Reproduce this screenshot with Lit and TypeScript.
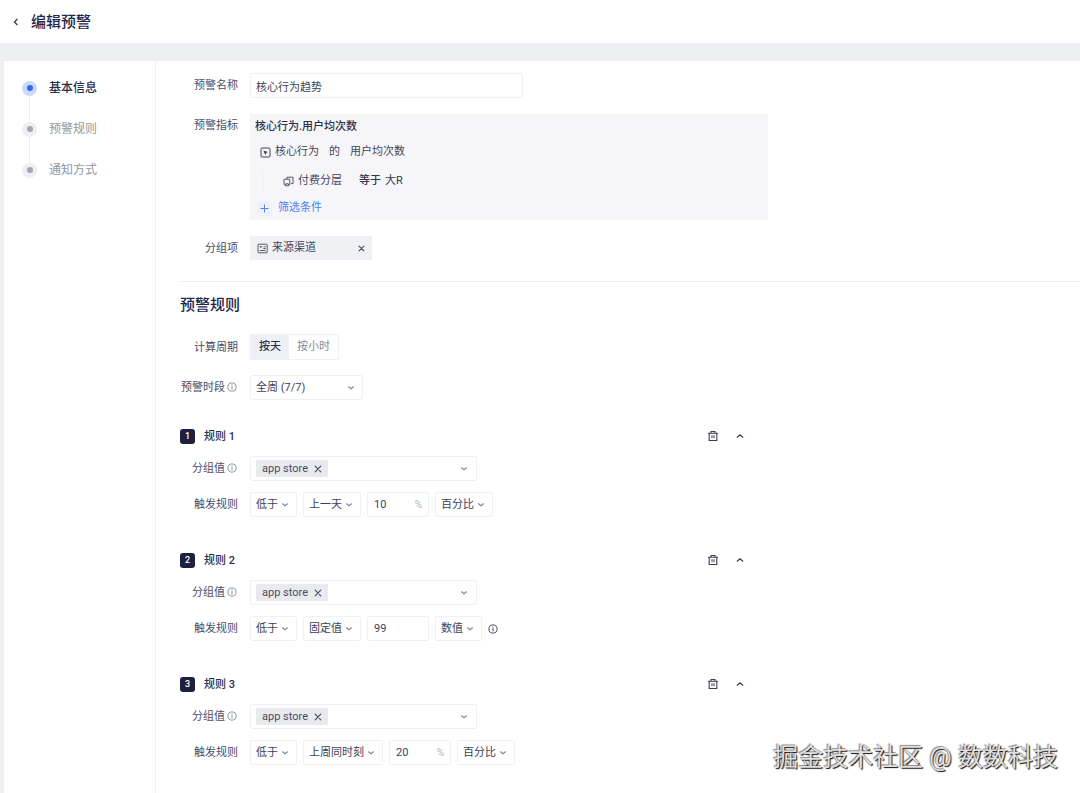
import { LitElement, html, svg, css, nothing } from "lit";
import { customElement, property, state } from "lit/decorators.js";
import { classMap } from "lit/directives/class-map.js";

interface Rule {
  id: number;
  group: string;
  compare: string;
  base: string;
  value: string;
  unit: string;
  percent: boolean;
}

const base = css`
  * { box-sizing: border-box; }
  button, input, select { font: inherit; color: inherit; margin: 0; }
  button { border: 0; padding: 0; background: none; cursor: pointer; }
  svg { display: block; flex: none; }
  .field {
    display: grid;
    grid-template-columns: 58px minmax(0, 1fr);
    column-gap: 12px;
    align-items: center;
  }
  .label {
    display: flex;
    justify-content: flex-end;
    align-items: center;
    gap: 2px;
    padding-top: 1px;
    white-space: nowrap;
    color: #4a4d66;
  }
  .label svg { margin: 0 1px 2px 0; color: #85889a; }
  .box {
    height: 25px;
    border: 1px solid #f0f1f4;
    border-radius: 2px;
    background: #fff;
    color: #3c3f58;
  }
`;

const chevron = (up = false) => html`<svg width="8" height="8" viewBox="0 0 8 8" fill="none" stroke="currentColor" stroke-width="1.2" stroke-linecap="round" stroke-linejoin="round" aria-hidden="true">
  ${up ? svg`<path d="M1.2 5.2 4 2.8 6.8 5.2"/>` : svg`<path d="M1.6 2.8 4 4.8 6.4 2.8"/>`}
</svg>`;

const info = () => html`<svg width="10" height="10" viewBox="0 0 10 10" fill="none" stroke="currentColor" aria-hidden="true">
  <circle cx="5" cy="5" r="4.1" stroke-width="0.9"/><path d="M5 4.3V7.4M5 2.5V3.5" stroke-width="1"/>
</svg>`;

const cross = (size: number) => html`<svg width=${size} height=${size} viewBox="0 0 8 8" fill="none" stroke="currentColor" stroke-width="1.2" stroke-linecap="round" aria-hidden="true">
  <path d="M1.2 1.2 6.8 6.8M6.8 1.2 1.2 6.8"/>
</svg>`;

@customElement("select-box")
class SelectBox extends LitElement {
  @property() value = "";
  @property() label = "";

  static styles = [base, css`
    :host { display: block; }
    .wrap { position: relative; display: flex; align-items: center; }
    select {
      appearance: none;
      width: 100%;
      padding: 0 18px 0 5px;
      outline: none;
    }
    svg { position: absolute; right: 8px; color: #85889a; pointer-events: none; }
  `];

  render() {
    return html`<div class="wrap">
      <select class="box" aria-label=${this.label}><option>${this.value}</option></select>
      ${chevron()}
    </div>`;
  }
}

@customElement("rule-card")
class RuleCard extends LitElement {
  @property({ attribute: false }) rule!: Rule;

  static styles = [base, css`
    :host { display: block; }
    .head { display: flex; align-items: center; height: 16px; max-width: 568px; margin-bottom: 12px; }
    .badge {
      width: 15px; height: 15px; border-radius: 3px; margin-right: 9px;
      background: #1f2040; color: #fff;
      display: grid; place-items: center;
      font-size: 9px; font-weight: 500; line-height: 15px;
    }
    .name { margin: 0; padding-top: 2px; font-size: 11px; font-weight: 500; color: #2c2f4a; flex: 1; }
    .tools { display: flex; gap: 11px; color: #3a3d50; }
    .tools button { width: 16px; height: 16px; display: grid; place-items: center; }
    .groups { display: flex; align-items: center; justify-content: space-between; max-width: 227px; padding: 0 8px 0 5px; }
    .tag { display: flex; align-items: center; gap: 6px; height: 17px; padding: 0 6px; background: #e9eaee; color: #4a4d62; }
    .open { color: #85889a; }
    .field + .field { margin-top: 11px; }
    .line { display: flex; align-items: center; gap: 6px; }
    .amount { display: flex; align-items: center; width: 62px; padding: 0 6px; }
    .amount input { flex: 1; min-width: 0; width: 0; border: 0; padding: 0; background: none; outline: none; }
    .sign { color: #b4b6c0; font-size: 10px; }
    .note { color: #3a3d50; }
  `];

  render() {
    const r = this.rule;
    return html`
      <div class="head">
        <span class="badge">${r.id}</span>
        <h3 class="name">规则 ${r.id}</h3>
        <div class="tools">
          <button aria-label="删除">
            <svg width="12" height="12" viewBox="0 0 12 12" fill="none" stroke="currentColor" stroke-width="1.1">
              <path d="M1 3.2H11M4 3.2V1.5H8V3.2M2.2 3.2V10.5H9.8V3.2"/><path d="M5 5.2V8.2M7 5.2V8.2" stroke-width="1"/>
            </svg>
          </button>
          <button aria-label="收起">${chevron(true)}</button>
        </div>
      </div>
      <div class="field">
        <span class="label">分组值 ${info()}</span>
        <div class="box groups">
          <span class="tag">${r.group}<button aria-label="移除">${cross(8)}</button></span>
          <button class="open" aria-label="分组值">${chevron()}</button>
        </div>
      </div>
      <div class="field">
        <label class="label" for="amount">触发规则</label>
        <div class="line">
          <select-box label="比较" .value=${r.compare}></select-box>
          <select-box label="对比基准" .value=${r.base}></select-box>
          <div class="box amount">
            <input id="amount" .value=${r.value} />
            ${r.percent ? html`<span class="sign">%</span>` : nothing}
          </div>
          <select-box label="单位" .value=${r.unit}></select-box>
          ${r.percent ? nothing : html`<span class="note">${info()}</span>`}
        </div>
      </div>`;
  }
}

@customElement("app-root")
class AppRoot extends LitElement {
  @state() private step = 0;
  @state() private period = 0;

  private steps = ["基本信息", "预警规则", "通知方式"];
  private periods = ["按天", "按小时"];
  private rules: Rule[] = [
    { id: 1, group: "app store", compare: "低于", base: "上一天", value: "10", unit: "百分比", percent: true },
    { id: 2, group: "app store", compare: "低于", base: "固定值", value: "99", unit: "数值", percent: false },
    { id: 3, group: "app store", compare: "低于", base: "上周同时刻", value: "20", unit: "百分比", percent: true },
  ];

  static styles = [base, css`
    :host {
      display: flex; flex-direction: column; min-height: 100vh; position: relative;
      background: #edeff2; color: #42455c;
      font: 11px/16px Roboto, "Noto Sans CJK SC", sans-serif;
    }
    .top { display: flex; align-items: center; gap: 11px; height: 43px; padding-left: 12px; background: #fff; }
    .top button { color: #2c2f4a; }
    .top h1 { margin: 0; font-size: 15px; line-height: 20px; font-weight: 500; color: #23264a; }
    .panel { flex: 1; display: flex; margin: 18px 0 0 4px; background: #fff; }
    .side { flex: none; width: 152px; border-right: 1px solid #eff0f3; padding: 19px 0 0 18px; }
    .steps { list-style: none; margin: 0; padding: 0; display: flex; flex-direction: column; gap: 25px; }
    .step { position: relative; }
    .step button { display: flex; align-items: center; gap: 12px; height: 16px; font-size: 12px; color: #9496a2; }
    .dot { width: 15px; height: 15px; border-radius: 50%; display: grid; place-items: center; background: #eeeff2; }
    .dot::after { content: ""; width: 6px; height: 6px; border-radius: 50%; background: #a5a7b0; }
    .step + .step::before { content: ""; position: absolute; left: 7px; top: -25px; width: 1px; height: 25px; background: #ecedf1; }
    .step.on button { color: #2c2f4a; font-weight: 500; }
    .on .dot { background: #cdd7fb; }
    .on .dot::after { background: #2f6bf0; }
    .main { flex: 1; min-width: 0; padding: 12px 0 28px 24px; }
    .name { width: 100%; max-width: 273px; padding: 0 5px; outline: none; }
    .metric { align-items: start; margin: 16px 0; }
    .metric .label { padding-top: 4px; }
    .card { max-width: 518px; background: #f6f6f9; padding: 5px 6px 4px 5px; }
    .card h4 { margin: 0; font-size: 11px; line-height: 16px; font-weight: 500; color: #2c2f4a; }
    .event { display: flex; align-items: center; gap: 4px; margin-top: 9px; padding-left: 5px; }
    .event .of { margin: 0 6px; }
    .cond { display: flex; align-items: center; gap: 4px; height: 22px; margin: 10px 0 8px 7px; padding-left: 20px; border-left: 1px solid #eceef2; }
    .cond .op { margin-left: 13px; font-weight: 500; }
    .cond .op, .cond .val { color: #33364f; }
    .add { display: flex; align-items: center; gap: 6px; padding-left: 2px; color: #4b82f5; }
    .plus { display: grid; place-items: center; width: 15px; height: 15px; border-radius: 3px; background: #eef1fb; }
    .chip { display: flex; align-items: center; gap: 4px; width: 122px; height: 24px; padding: 0 7px; background: #f0f1f4; }
    .chip span { flex: 1; }
    .rule { border: 0; border-top: 1px solid #eeeff2; margin: 21px 0 0; }
    .main h2 { margin: 13px 0 19px; font-size: 15px; line-height: 20px; font-weight: 500; color: #23264a; }
    .seg { display: inline-flex; justify-self: start; height: 26px; border: 1px solid #f0f1f4; }
    .seg button { padding: 0 8px; color: #85889a; }
    .seg button.on { background: #eff0f5; color: #2c2f4a; font-weight: 500; }
    .slot { margin-top: 15px; }
    .slot select-box { width: 113px; }
    .rules { display: flex; flex-direction: column; gap: 35px; margin-top: 28px; }
    .mark {
      position: absolute; right: 22px; bottom: 17px; pointer-events: none;
      font-size: 25px; line-height: 36px; color: #dedede; white-space: nowrap;
      text-shadow: 1px 1px 1px #111, -1px -1px 1px rgba(0, 0, 0, 0.45);
    }
  `];

  render() {
    return html`
      <header class="top">
        <button aria-label="返回"><svg width="8" height="8" viewBox="0 0 8 8" fill="none" stroke="currentColor" stroke-width="1.2"><path d="M5.4 1 2.4 4 5.4 7"/></svg></button>
        <h1>编辑预警</h1>
      </header>
      <div class="panel">
        <nav class="side">
          <ol class="steps">
            ${this.steps.map((s, i) => html`<li class=${classMap({ step: true, on: i === this.step })}>
              <button @click=${() => (this.step = i)}><span class="dot"></span>${s}</button>
            </li>`)}
          </ol>
        </nav>
        <main class="main">
          <div class="field">
            <label class="label" for="name">预警名称</label>
            <input id="name" class="box name" value="核心行为趋势" />
          </div>
          <div class="field metric">
            <span class="label">预警指标</span>
            <div class="card">
              <h4>核心行为.用户均次数</h4>
              <div class="event">
                <svg width="11" height="11" viewBox="0 0 11 11" fill="none" stroke="currentColor"><rect x="1" y="1" width="9" height="9" rx="1"/><path d="M3.4 3.4 8 5.1 6.2 6 5.2 8Z" fill="currentColor" stroke="none"/></svg>
                <span>核心行为</span><span class="of">的</span><span>用户均次数</span>
              </div>
              <div class="cond">
                <svg width="11" height="11" viewBox="0 0 11 11" fill="none" stroke="currentColor" stroke-width="0.9" stroke-linejoin="round"><path d="M4 3V1.2H10V7.6H8M1 3.2H6.8V8.2L5.6 9.8H2.6L1 8.2ZM2.6 9.6V7.8H5.4V9.6"/></svg>
                <span>付费分层</span><span class="op">等于</span><span class="val">大R</span>
              </div>
              <button class="add">
                <span class="plus"><svg width="9" height="9" viewBox="0 0 9 9" stroke="currentColor"><path d="M4.5 0.5V8.5M0.5 4.5H8.5"/></svg></span>
                筛选条件
              </button>
            </div>
          </div>
          <div class="field">
            <span class="label">分组项</span>
            <div class="chip">
              <svg width="11" height="11" viewBox="0 0 11 11" fill="none" stroke="currentColor" stroke-width="0.9"><rect x="1" y="1.2" width="9.2" height="8.6" rx="0.8"/><path d="M2.8 3.6H4.8M3.8 3.6V5M6.4 3.8H8.6M6.4 5.5H8.6M2.8 7.5H8.6"/></svg>
              <span>来源渠道</span>
              <button aria-label="移除">${cross(7)}</button>
            </div>
          </div>
          <hr class="rule" />
          <h2>预警规则</h2>
          <div class="field">
            <span class="label">计算周期</span>
            <div class="seg" role="group" aria-label="计算周期">
              ${this.periods.map((p, i) => html`<button class=${classMap({ on: i === this.period })} aria-pressed=${i === this.period ? "true" : "false"} @click=${() => (this.period = i)}>${p}</button>`)}
            </div>
          </div>
          <div class="field slot">
            <span class="label">预警时段 ${info()}</span>
            <select-box label="预警时段" value="全周 (7/7)"></select-box>
          </div>
          <div class="rules">${this.rules.map((r) => html`<rule-card .rule=${r}></rule-card>`)}</div>
        </main>
      </div>
      <div class="mark">掘金技术社区 @ 数数科技</div>`;
  }
}
